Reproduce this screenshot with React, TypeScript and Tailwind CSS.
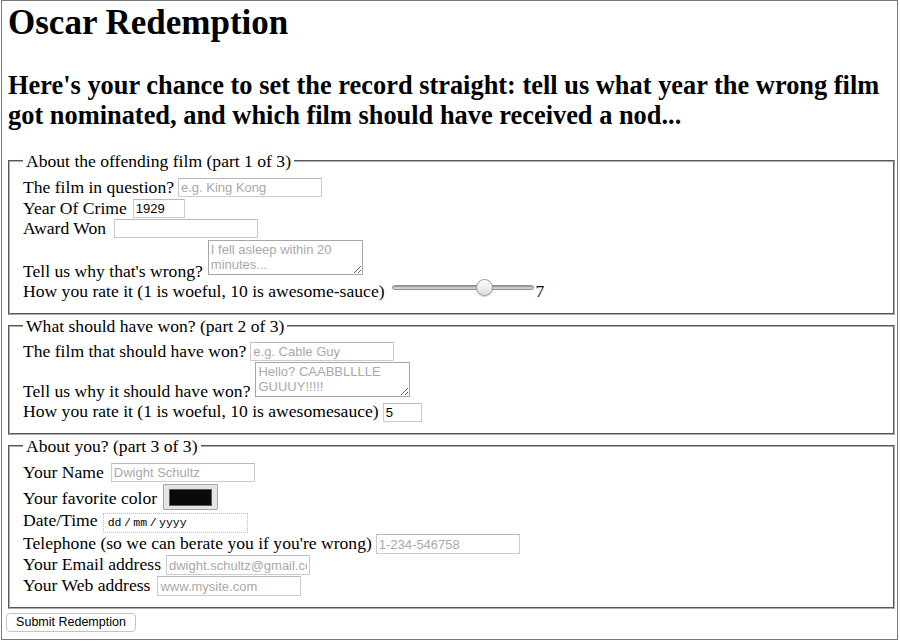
import React from 'react';

const inputCls =
  "border border-[#cbcbcb] border-t-[#b9b9b9] bg-white px-[2px] py-0 text-[13px] leading-[15px] text-black font-['Liberation_Sans',Arial,sans-serif] placeholder:text-[#a9a9a9] outline-none";

const textareaCls =
  "border border-[#a6a6a6] bg-white px-[2px] py-[1px] text-[13px] leading-[15px] text-black font-['Liberation_Sans',Arial,sans-serif] placeholder:text-[#a9a9a9] outline-none resize overflow-hidden";

function Row({ h, children }: { h: string; children: React.ReactNode }) {
  return <div className={`flex items-end gap-[4px] ${h}`}>{children}</div>;
}

function Label({ mb, children }: { mb: string; children: React.ReactNode }) {
  return <span className={`leading-[20px] whitespace-nowrap ${mb}`}>{children}</span>;
}

function Fieldset({ legend, className, children }: { legend: string; className: string; children: React.ReactNode }) {
  return (
    <fieldset className={`border-2 border-[#acacac] [border-style:groove] px-[13px] pt-[5px] ${className}`}>
      <legend className="px-[3px] leading-[20px]">{legend}</legend>
      {children}
    </fieldset>
  );
}

function Slider() {
  return (
    <div className="relative mb-[5px] h-[17px] w-[142px]">
      <div className="absolute left-0 right-0 top-[6px] h-[5px] rounded-full border border-[#8e8e8e] bg-[#cfcfcf] shadow-[inset_0_1px_1px_rgba(0,0,0,0.25)]" />
      <div className="absolute left-[84px] top-0 h-[17px] w-[17px] rounded-full border border-[#9a9a9a] bg-gradient-to-b from-white to-[#dcdcdc] shadow-[0_1px_1px_rgba(0,0,0,0.2)]" />
    </div>
  );
}

export default function App() {
  return (
    <div className="ml-[1px] h-[640px] w-[897px] overflow-hidden border border-[#7b7b7b] bg-white pl-[6px] pr-[2px] pt-[2px] font-['Liberation_Serif','Times_New_Roman',serif] text-[17.6px] text-black">
      <h1 className="text-[35px] font-bold leading-[40px]">Oscar Redemption</h1>
      <h2 className="mt-[27px] text-[26.4px] font-bold leading-[30px]">
        Here's your chance to set the record straight: tell us what year the wrong film got nominated, and which film should have received a nod...
      </h2>

      <form onSubmit={(e) => e.preventDefault()}>
        <Fieldset legend="About the offending film (part 1 of 3)" className="mt-[21px] pb-[12px]">
          <Row h="h-[21px]">
            <Label mb="mb-0">The film in question?</Label>
            <input className={`${inputCls} h-[19px] w-[144px]`} placeholder="e.g. King Kong" />
          </Row>
          <Row h="h-[21px]">
            <Label mb="mb-0">Year Of Crime</Label>
            <input className={`${inputCls} ml-[2px] h-[19px] w-[52px]`} defaultValue="1929" />
          </Row>
          <Row h="h-[20px]">
            <Label mb="mb-0">Award Won</Label>
            <input className={`${inputCls} ml-[4px] h-[19px] w-[144px]`} />
          </Row>
          <Row h="h-[43px]">
            <Label mb="mb-0">Tell us why that's wrong?</Label>
            <textarea className={`${textareaCls} ml-[1px] mb-[6px] h-[35px] w-[155px]`} placeholder="I fell asleep within 20 minutes..." />
          </Row>
          <Row h="h-[20px]">
            <Label mb="mb-0">How you rate it (1 is woeful, 10 is awesome-sauce)</Label>
            <div className="ml-[3px] flex items-end gap-[2px]">
              <Slider />
              <span className="leading-[20px]">7</span>
            </div>
          </Row>
        </Fieldset>

        <Fieldset legend="What should have won? (part 2 of 3)" className="mt-[1px] pb-[11px]">
          <Row h="h-[20px]">
            <Label mb="mb-0">The film that should have won?</Label>
            <input className={`${inputCls} h-[19px] w-[144px]`} placeholder="e.g. Cable Guy" />
          </Row>
          <Row h="h-[40px]">
            <Label mb="mb-0">Tell us why it should have won?</Label>
            <textarea className={`${textareaCls} ml-[1px] mb-[4px] h-[35px] w-[155px]`} placeholder="Hello? CAABBLLLLE GUUUY!!!!!" />
          </Row>
          <Row h="h-[21px]">
            <Label mb="mb-[1px]">How you rate it (1 is woeful, 10 is awesomesauce)</Label>
            <input className={`${inputCls} h-[19px] w-[39px]`} defaultValue="5" />
          </Row>
        </Fieldset>

        <Fieldset legend="About you? (part 3 of 3)" className="mt-[1px] pb-[11px]">
          <Row h="h-[21px]">
            <Label mb="mb-0">Your Name</Label>
            <input className={`${inputCls} ml-[3px] h-[19px] w-[144px]`} placeholder="Dwight Schultz" />
          </Row>
          <Row h="h-[28px]">
            <Label mb="mb-[2px]">Your favorite color</Label>
            <div className="ml-[2px] flex h-[26px] w-[55px] items-center justify-center rounded-[1px] border border-[#a5a5a5] bg-[#e4e4e4]">
              <div className="h-[17px] w-[43px] border border-[#5a5a5a] bg-[#0a0a0a]" />
            </div>
          </Row>
          <Row h="h-[23px]">
            <Label mb="mb-[3px]">Date/Time</Label>
            <div className="ml-[1px] flex h-[20px] w-[145px] items-center gap-[2.5px] border border-dotted border-[#bdbdbd] bg-white pl-[4px] font-['Liberation_Mono','Courier_New',monospace] text-[11.5px] leading-[14px]">
              <span>dd</span>
              <span>/</span>
              <span>mm</span>
              <span>/</span>
              <span>yyyy</span>
            </div>
          </Row>
          <Row h="h-[21px]">
            <Label mb="mb-[1px]">Telephone (so we can berate you if you're wrong)</Label>
            <input className={`${inputCls} h-[20px] w-[144px]`} placeholder="1-234-546758" />
          </Row>
          <Row h="h-[21px]">
            <Label mb="mb-[1px]">Your Email address</Label>
            <input className={`${inputCls} ml-[1px] h-[20px] w-[144px]`} placeholder="dwight.schultz@gmail.com" />
          </Row>
          <Row h="h-[21px]">
            <Label mb="mb-[1px]">Your Web address</Label>
            <input className={`${inputCls} ml-[3px] h-[20px] w-[144px]`} placeholder="www.mysite.com" />
          </Row>
        </Fieldset>

        <button
          type="submit"
          className="ml-[-2px] mt-[4px] block h-[19px] w-[130px] rounded-[4px] border border-[#c4c4c4] bg-white text-[12.5px] leading-[15px] text-black font-['Liberation_Sans',Arial,sans-serif]"
        >
          Submit Redemption
        </button>
      </form>
    </div>
  );
}
